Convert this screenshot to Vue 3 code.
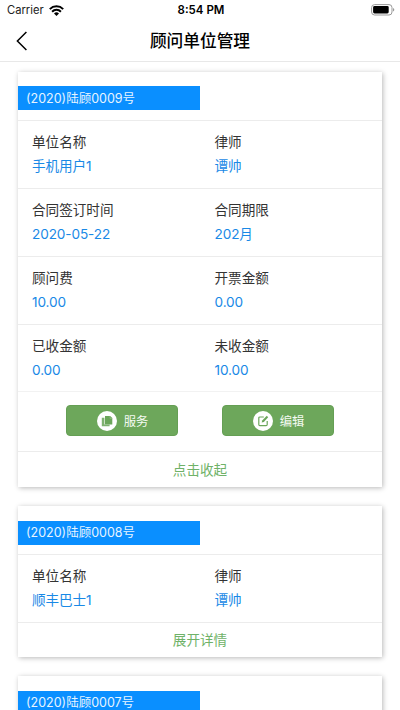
<script setup>
const cards = [
  {
    no: '(2020)陆顾0009号',
    rows: [
      [['单位名称', '手机用户1'], ['律师', '谭帅']],
      [['合同签订时间', '2020-05-22'], ['合同期限', '202月']],
      [['顾问费', '10.00'], ['开票金额', '0.00']],
      [['已收金额', '0.00'], ['未收金额', '10.00']],
    ],
    actions: true,
    toggle: '点击收起',
  },
  {
    no: '(2020)陆顾0008号',
    rows: [[['单位名称', '顺丰巴士1'], ['律师', '谭帅']]],
    toggle: '展开详情',
  },
  { no: '(2020)陆顾0007号', rows: [] },
]
</script>

<template>
  <div class="screen">
    <div class="status">
      <div class="carrier">
        <span>Carrier</span>
        <svg class="wifi" width="15" height="11" viewBox="0 0 15 11">
          <g fill="none" stroke="#000" stroke-width="2">
            <path d="M0.8 4.1A9.5 9.5 0 0 1 14.2 4.1" />
            <path d="M3.1 6.7A6.2 6.2 0 0 1 11.9 6.7" />
          </g>
          <path d="M5 8.5A3.6 3.6 0 0 1 10 8.5L7.5 11Z" />
        </svg>
      </div>
      <div class="time">8:54 PM</div>
      <div class="power">
        <svg width="24" height="12" viewBox="0 0 24 12">
          <rect x="0.6" y="0.6" width="20.4" height="10.4" rx="3" fill="#fff" stroke="#999" />
          <rect x="2.1" y="2.1" width="15.6" height="7.4" rx="1.4" fill="#000" />
          <path d="M22 4C23.8 4.6 23.8 7 22 7.6Z" fill="#999" />
        </svg>
      </div>
    </div>
    <header class="nav">
      <svg class="back" width="12" height="20" viewBox="0 0 12 20">
        <path d="M10.4 1L1.4 10L10.4 19" fill="none" stroke="#000" stroke-width="1.5" />
      </svg>
      <h1>顾问单位管理</h1>
    </header>
    <main class="list">
      <section v-for="card in cards" :key="card.no" class="card">
        <div class="head"><div class="tag">{{ card.no }}</div></div>
        <div v-for="(row, i) in card.rows" :key="i" class="row">
          <div v-for="cell in row" :key="cell[0]" class="cell">
            <div class="label">{{ cell[0] }}</div>
            <div class="value">{{ cell[1] }}</div>
          </div>
        </div>
        <div v-if="card.actions" class="actions">
          <button class="btn">
            <svg width="20" height="20" viewBox="0 0 20 20">
              <circle cx="10" cy="10" r="10" fill="#fff" />
              <path d="M8 5H13.2L15.3 7.1V13.4H8Z" fill="#6ba65a" />
              <path d="M7.4 6.8H4.8V15.2H12.6V13.4H7.4Z" fill="#7fb271" />
              <path d="M13 5V7.4H15.3" fill="none" stroke="#a5cb9b" stroke-width="0.5" />
            </svg>
            <span>服务</span>
          </button>
          <button class="btn">
            <svg width="20" height="20" viewBox="0 0 20 20">
              <circle cx="10" cy="10" r="10" fill="#fff" />
              <path d="M10.8 6H6.9Q5.8 6 5.8 7.1V13.6Q5.8 14.7 6.9 14.7H13.1Q14.2 14.7 14.2 13.6V10" fill="none" stroke="#6ba65a" stroke-width="1.2" />
              <path d="M13.8 4.8L15.2 6.2L10.8 11L8.7 11.6L9.2 9.5Z" fill="#6ba65a" />
            </svg>
            <span>编辑</span>
          </button>
        </div>
        <div v-if="card.toggle" class="toggle">{{ card.toggle }}</div>
      </section>
    </main>
  </div>
</template>

<style>
body {
  background: #fff;
  overflow: hidden;
}
</style>

<style scoped>
.screen {
  height: 710px;
  overflow: hidden;
  box-sizing: border-box;
  background: #fff;
  font-family: Inter, "Noto Sans CJK SC", sans-serif;
  color: #333;
  display: flex;
  flex-direction: column;
}
.status {
  flex: none;
  height: 20px;
  padding: 0 5px 0 7px;
  display: grid;
  grid-template-columns: 1fr auto 1fr;
  align-items: center;
  color: #000;
  font-size: 11.5px;
  line-height: 20px;
}
.carrier {
  display: flex;
  align-items: center;
  gap: 5px;
  color: #222;
  font-size: 11.2px;
}
.time {
  font-weight: 600;
}
.power {
  display: flex;
  justify-content: flex-end;
}
.nav {
  flex: none;
  height: 42px;
  box-sizing: border-box;
  border-bottom: 1px solid #e8e8e8;
  display: grid;
  grid-template-columns: 60px 1fr 60px;
  align-items: center;
}
.back {
  margin-left: 16px;
}
h1 {
  margin: 0;
  padding-top: 1px;
  text-align: center;
  font-size: 16.7px;
  line-height: 40px;
  font-weight: 500;
  color: #000;
}
.list {
  flex: 1;
  min-height: 0;
  padding: 10px 18px 0;
  display: flex;
  flex-direction: column;
  gap: 19px;
}
.card {
  flex: none;
  background: #fff;
  box-shadow: 1px 1px 5px rgba(0, 0, 0, 0.28);
}
.card:last-child {
  flex: 1;
}
.head {
  height: 48px;
  box-sizing: border-box;
  padding-top: 14px;
}
.card + .card .head {
  padding-top: 15px;
}
.tag {
  width: 182px;
  height: 24px;
  box-sizing: border-box;
  padding-left: 8px;
  background: #0a8fff;
  color: #e6f4ff;
  font-size: 12.5px;
  line-height: 25px;
}
.card + .card .tag {
  line-height: 24px;
}
.row {
  height: 68px;
  box-sizing: border-box;
  border-top: 1px solid #ececec;
  padding: 9px 14px 0;
  display: grid;
  grid-template-columns: 182.5px 1fr;
}
.row + .row {
  height: 67.8px;
}
.cell {
  font-size: 13.6px;
  line-height: 24px;
}
.value {
  color: #1989e6;
  letter-spacing: -0.1px;
}
.actions {
  height: 59.6px;
  box-sizing: border-box;
  border-top: 1px solid #f2f2f2;
  padding: 0 48px 2px;
  display: flex;
  justify-content: space-between;
  align-items: center;
}
.btn {
  width: 112px;
  height: 31px;
  padding: 0 0 0 1px;
  border: 1px solid #659f54;
  box-sizing: border-box;
  border-radius: 4px;
  background: #6da75b;
  color: #f4faf2;
  font: inherit;
  font-size: 12.3px;
  display: flex;
  align-items: center;
  justify-content: center;
  gap: 7px;
}
.toggle {
  height: 36px;
  box-sizing: border-box;
  border-top: 1px solid #ececec;
  text-align: center;
  color: #6fb268;
  font-size: 13.6px;
  line-height: 36px;
}
.card + .card .toggle {
  height: 35px;
  line-height: 35px;
}
</style>
